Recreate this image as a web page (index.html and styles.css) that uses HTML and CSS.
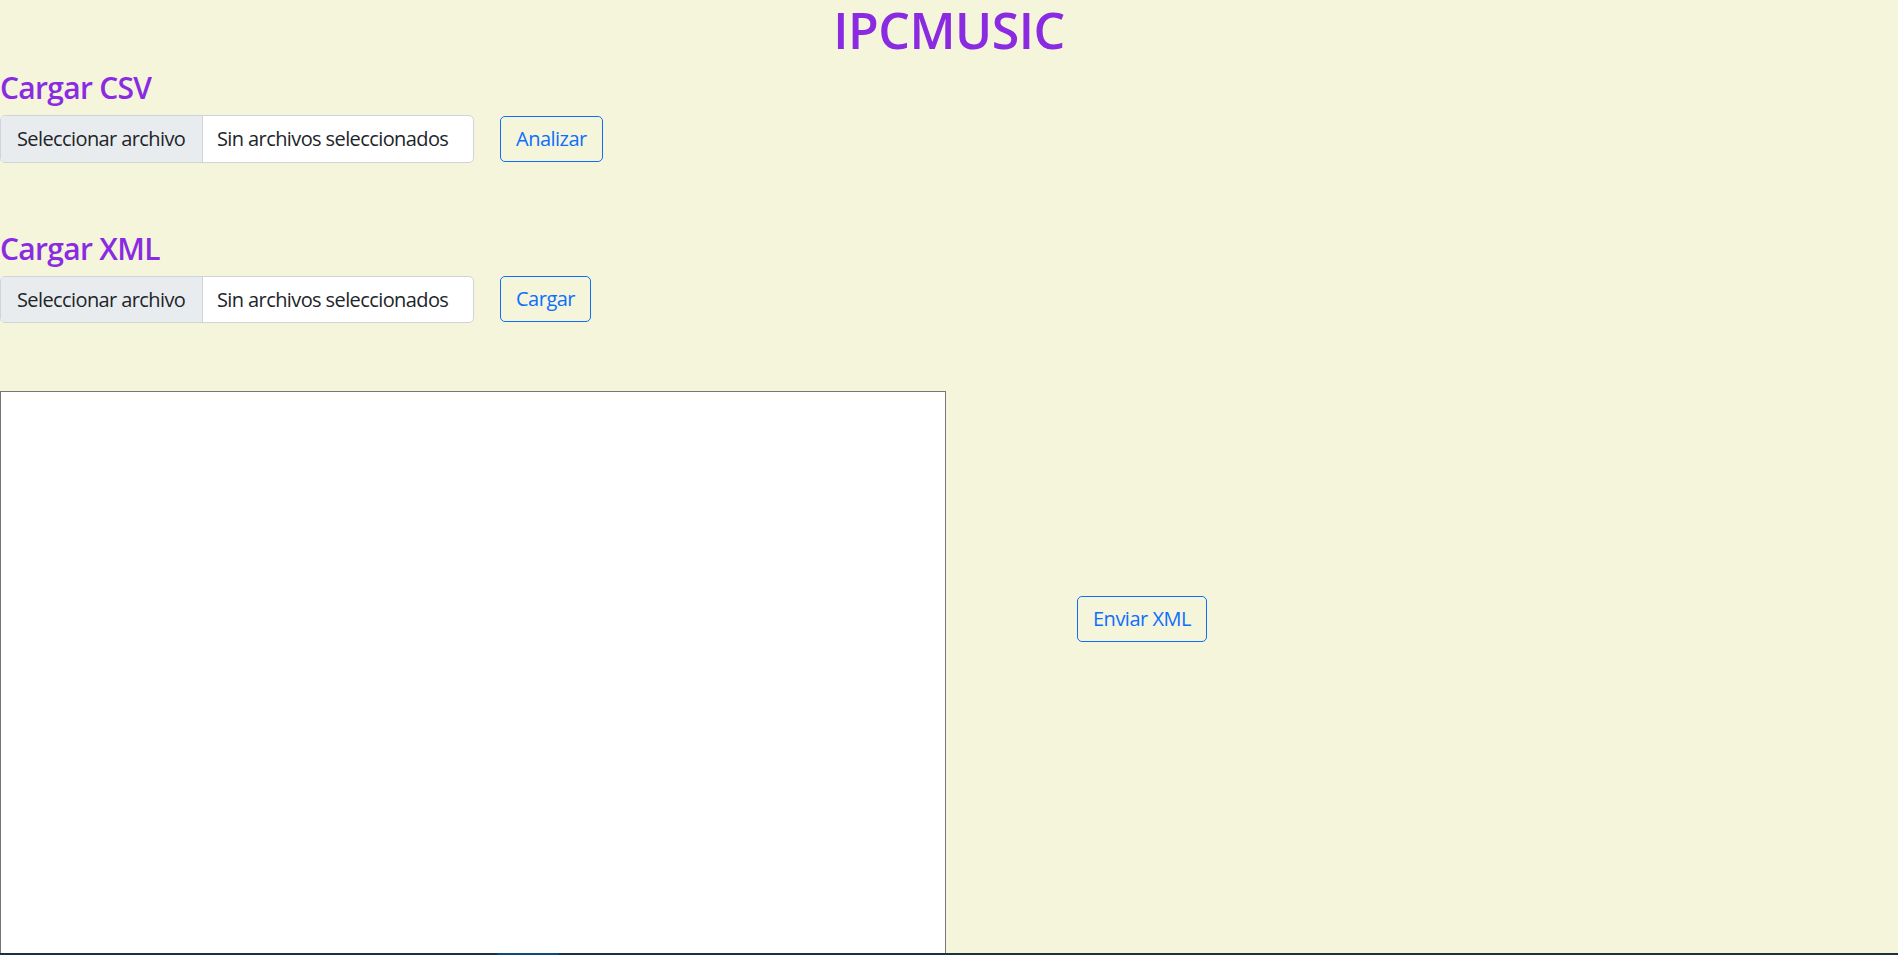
FILE: index.html
```html
<!DOCTYPE html>
<html lang="es">
<head>
<meta charset="utf-8">
<title>IPCMUSIC</title>
<link rel="stylesheet" href="styles.css">
</head>
<body>
<h1 class="title">IPCMUSIC</h1>
<section class="upload upload-csv">
  <h4 class="section-title">Cargar CSV</h4>
  <div class="upload-row">
    <div class="file-input"><span class="file-btn">Seleccionar archivo</span><span class="file-name">Sin archivos seleccionados</span></div>
    <button class="btn-outline">Analizar</button>
  </div>
</section>
<section class="upload upload-xml">
  <h4 class="section-title">Cargar XML</h4>
  <div class="upload-row">
    <div class="file-input"><span class="file-btn">Seleccionar archivo</span><span class="file-name">Sin archivos seleccionados</span></div>
    <button class="btn-outline">Cargar</button>
  </div>
</section>
<div class="work-row">
  <textarea class="xml-area"></textarea>
  <div class="send-col"><button class="btn-outline">Enviar XML</button></div>
</div>
<div class="taskbar"><span class="taskbar-active"></span></div>
</body>
</html>
```
FILE: styles.css
```css
html, body {
  margin: 0;
  padding: 0;
}
body {
  background: #f5f5dc;
  font-family: "Open Sans", "Noto Sans", sans-serif;
  color: #212529;
  font-size: 20px;
  overflow: hidden;
  height: 955px;
}
.title {
  margin: 0 0 10px;
  text-align: center;
  font-size: 50px;
  line-height: 60px;
  font-weight: 600;
  letter-spacing: -0.5px;
  color: #8a2be2;
}
.section-title {
  margin: 0 0 9px;
  font-size: 30px;
  line-height: 36px;
  font-weight: 600;
  letter-spacing: -0.7px;
  color: #8a2be2;
}
.upload-xml {
  margin-top: 68px;
}
.upload-row {
  display: flex;
  align-items: center;
  gap: 26px;
}
.file-input {
  display: flex;
  width: 474px;
  height: 47.5px;
  box-sizing: border-box;
  border: 1px solid #ced4da;
  border-radius: 5px;
  background: #fff;
  overflow: hidden;
  line-height: 45px;
  letter-spacing: -0.6px;
}
.file-btn {
  width: 202px;
  box-sizing: border-box;
  padding-left: 16px;
  background: #e9ecef;
  border-right: 1px solid #ced4da;
  white-space: nowrap;
}
.file-name {
  flex: 1;
  padding-left: 14px;
  white-space: nowrap;
}
.btn-outline {
  font-family: inherit;
  font-size: 20px;
  line-height: 30px;
  letter-spacing: -0.5px;
  height: 46px;
  padding: 0 15px;
  color: #0d6efd;
  background: transparent;
  border: 1px solid #0d6efd;
  border-radius: 5px;
}
.work-row {
  display: flex;
  margin-top: 68px;
}
.xml-area {
  width: 946px;
  height: 700px;
  box-sizing: border-box;
  margin: 0;
  border: 1px solid #767676;
  background: #fff;
  resize: none;
  flex: none;
}
.send-col {
  padding-left: 131px;
  padding-top: 205px;
}
.taskbar {
  position: fixed;
  left: 0;
  right: 0;
  bottom: 0;
  height: 2px;
  background: #1b3040;
}
.taskbar-active {
  position: absolute;
  left: 497px;
  width: 62px;
  top: 0;
  bottom: 0;
  background: #0e4a80;
}
```
